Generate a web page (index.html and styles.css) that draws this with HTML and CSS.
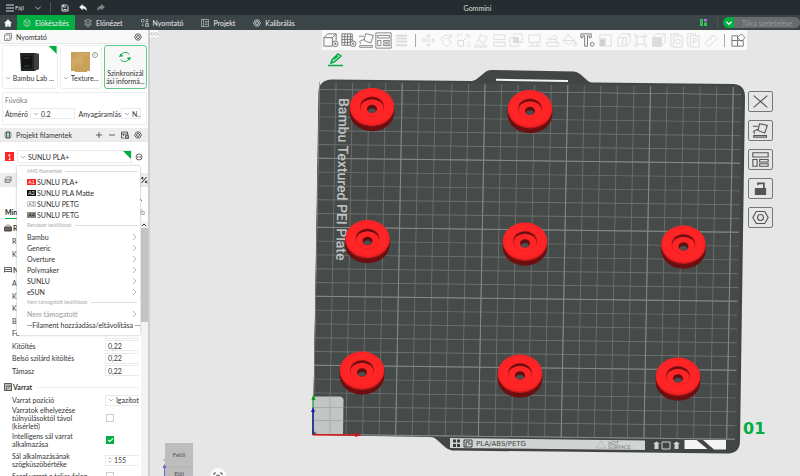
FILE: index.html
```html
<!DOCTYPE html>
<html lang="hu">

<head>
  <meta charset="UTF-8">
  <meta name="viewport" content="width=device-width, initial-scale=1.0">
  <title>Gommini</title>
  <link rel="stylesheet" href="styles.css">
</head>

<body>
  <svg class="defs" aria-hidden="true">
    <symbol id="down" viewBox="0 0 6 6"><path d="M1 2l2 2 2-2" /></symbol>
    <symbol id="right" viewBox="0 0 6 8"><path d="M2 1l3 3-3 3" /></symbol>
    <symbol id="gear" viewBox="0 0 16 16"><path stroke-width="1.500" d="M5 2h6l4 6-4 6H5L1 8z" /><circle cx="8" cy="8" r="3" stroke-width="1.500" /></symbol>
    <symbol id="cube" viewBox="0 0 16 16"><path d="M8 1l6 3v8l-6 3-6-3V4zM2 4l6 4 6-4M8 8v7" /></symbol>
    <symbol id="layers" viewBox="0 0 16 16"><path d="M8 1l7 3-7 4-7-4zM1 8l7 4 7-4M1 11l7 4 7-4" /></symbol>
    <symbol id="arrange" viewBox="0 0 20 20"><path d="M1 1h18v18H1zM3 4h14v3H3zM3 10h4v6H3zM10 10h7v2h-7zM10 14h7v2h-7z" /></symbol>
    <symbol id="orient" viewBox="0 0 20 20"><path d="M9 2l9 2-3 9-8-3zM2 16h15v2H2zM1 5h6M8 8l-6 3 1 3" /></symbol>
  </svg>

  <header class="titlebar">
    <button class="file"><svg class="ico" viewBox="0 0 8 8"><path d="M0 1h8M0 4h8M0 7h8" /></svg>Fájl</button>
    <button aria-label="Menü" class="more"><svg class="ico"><use href="#down" /></svg></button>
    <i class="line"></i>
    <button aria-label="Mentés"><svg class="ico" viewBox="0 0 16 16"><path stroke-width="2" d="M2 2h9l3 3v9H2zM5 2v4h5M5 11h6" /></svg></button>
    <button aria-label="Vissza"><svg class="ico" viewBox="0 0 16 16"><path fill="#fff" d="M1 6l6-5v3c5 0 8 3 8 9-2-3-4-4-8-4v3z" /></svg></button>
    <button aria-label="Újra" class="off"><svg class="ico" viewBox="0 0 16 16"><path fill="#888" d="M15 6L9 1v3C4 4 1 7 1 13c2-3 4-4 8-4v3z" /></svg></button>
    <h1>Gommini</h1>
  </header>

  <nav class="tabs">
    <a href="#" class="home" aria-label="Kezdőlap"><svg class="ico" viewBox="0 0 16 16"><path fill="#fff" d="M8 1l7 7h-2v7h-4v-4H7v4H3V8H1z" /></svg></a>
    <a href="#" class="active"><svg class="ico"><use href="#cube" /></svg>Előkészítés</a>
    <a href="#"><svg class="ico"><use href="#layers" /></svg>Előnézet</a>
    <a href="#"><svg class="ico" viewBox="0 0 16 16"><path d="M1 1h5v5H1zM10 1h4v4h-4zM3 9v4h3M9 9h6v6H9zM9 12h6M12 5v4" /></svg>Nyomtató</a>
    <a href="#"><svg class="ico" viewBox="0 0 16 16"><path d="M1 1h14v14H1zM5 1v14M8 5h5M8 8h5M8 11h5" /></svg>Projekt</a>
    <a href="#"><svg class="ico"><use href="#gear" /></svg>Kalibrálás</a>
    <span class="slice">
      <svg class="assist" viewBox="0 0 14 14"><path fill="#2fc35b" d="M0 0h6v14H0zM8 7h6v7H8z" /><path fill="#a77be0" d="M8 0h6v5H8z" /><path stroke="#333" d="M2 4h2M2 8h2" /></svg>
      <i class="line"></i>
      <button class="go" aria-label="Szeletelés módja"><svg class="ico"><use href="#down" /></svg></button>
      <button class="run" disabled>Tálca szeletelése</button>
    </span>
  </nav>

  <main>
    <aside class="sidebar">
      <div class="head">
        <svg class="ico" viewBox="0 0 16 16"><path d="M4 3V1h11v11h-2M1 4h11v11H1zM4 12h5" /></svg>
        <h2>Nyomtató</h2>
        <button aria-label="Nyomtató beállításai"><svg class="ico"><use href="#gear" /></svg></button>
      </div>
      <div class="cards">
        <div class="card printer">
          <svg class="photo" viewBox="0 0 20 20"><path fill="#222527" d="M0 1h14l5 1v15l-5 2H1z" /><path fill="#3d4144" d="M14 1l5 1v15l-5 2z" /><path fill="#101213" d="M2 4h10v12H2z" /><path stroke="#777" d="M3 6h7M4 14h6" stroke-width=".5" /></svg>
          <label class="combo"><svg class="ico"><use href="#down" /></svg><select aria-label="Nyomtató"><option>Bambu Lab ...</option></select></label>
        </div>
        <div class="card bed">
          <svg class="photo" viewBox="0 0 20 20"><path fill="#c9a15b" d="M0 0h19v19h-3v1H4v-1H0z" /><path fill="#cfa965" d="M1 8L9 1h9L1 16z" /><path stroke="#dcbd80" d="M10 7v6M7 10h6" stroke-width=".5" /></svg>
          <span class="info">i</span>
          <label class="combo"><svg class="ico"><use href="#down" /></svg><select aria-label="Tálca"><option>Texture...</option></select></label>
        </div>
        <button class="card sync">
          <svg viewBox="0 0 16 16"><path d="M3 6a6 6 0 0 1 10-1M13 10a6 6 0 0 1-10 1" /><path fill="#00ae42" d="M1 8l2-4 3 3zM15 8l-2 4-3-3z" stroke="none" /></svg>
          Szinkronizál<br>ási informá...
        </button>
      </div>
      <div class="nozzle">
        <p>Fúvóka</p>
        <div>
          <label for="dia">Átmérő</label>
          <span class="combo boxed dia"><svg class="ico"><use href="#down" /></svg><select id="dia"><option>0.2</option></select></span>
          <label for="flow">Anyagáramlás</label>
          <span class="combo boxed flow"><svg class="ico"><use href="#down" /></svg><select id="flow"><option>N...</option></select></span>
        </div>
      </div>
      <div class="head gray">
        <svg class="ico" viewBox="0 0 16 16"><path fill="#9edfb3" d="M5 2h6v12H5z" /><path d="M4 1C1 4 1 12 4 15M12 1c3 3 3 11 0 14M5 2h6v12H5z" /></svg>
        <h2>Projekt filamentek</h2>
        <button aria-label="Hozzáadás"><svg class="ico" viewBox="0 0 16 16"><path stroke-width="1.500" d="M8 2v12M2 8h12" /></svg></button>
        <button aria-label="Eltávolítás"><svg class="ico" viewBox="0 0 16 16"><path stroke-width="1.500" d="M2 8h12" /></svg></button>
        <button aria-label="AMS szinkron"><svg class="ico" viewBox="0 0 16 16"><path stroke-width="1.500" d="M1 6V2h12v5M1 6h14M1 6v8h6M5 6v4M9 9h6v6H9zM10 12h4" /></svg></button>
        <button aria-label="Filament beállításai"><svg class="ico"><use href="#gear" /></svg></button>
      </div>
      <div class="filament">
        <button class="num">1</button>
        <label class="combo boxed"><svg class="ico"><use href="#down" /></svg><select aria-label="Filament"><option>SUNLU PLA+</option></select></label>
        <button class="dots" aria-label="Szerkesztés"><svg class="ico" viewBox="0 0 16 16"><circle cx="8" cy="8" r="6" stroke-width="1.500" /><path stroke-width="2" d="M4 8h2M7 8h2M10 8h2" /></svg></button>

        <div class="menu">
          <p>AMS filamentek</p>
          <a href="#"><b class="a1">A1</b>SUNLU PLA+</a>
          <a href="#"><b class="a2">A2</b>SUNLU PLA Matte</a>
          <a href="#"><b class="a3">A3</b>SUNLU PETG</a>
          <a href="#"><b class="a4">A4</b>SUNLU PETG</a>
          <p class="sub">Rendszer beállítások</p>
          <a href="#">Bambu<svg class="ico"><use href="#right" /></svg></a>
          <a href="#">Generic<svg class="ico"><use href="#right" /></svg></a>
          <a href="#">Overture<svg class="ico"><use href="#right" /></svg></a>
          <a href="#">Polymaker<svg class="ico"><use href="#right" /></svg></a>
          <a href="#">SUNLU<svg class="ico"><use href="#right" /></svg></a>
          <a href="#">eSUN<svg class="ico"><use href="#right" /></svg></a>
          <p class="sub">Nem támogatott beállítások</p>
          <a href="#" class="dim">Nem támogatott<svg class="ico"><use href="#right" /></svg></a>
          <a href="#">--Filament hozzáadása/eltávolítása --</a>
        </div>
      </div>
      <div class="head gray process">
        <svg class="ico" viewBox="0 0 16 16"><path d="M5 2h10l-3 5H2zM2 7v3h10l3-5M2 10v3h10l3-5" /></svg>
        <button aria-label="Összehasonlítás"><svg class="ico" viewBox="0 0 16 16"><path stroke-width="2" d="M3 14L13 2M2 4h5M5 2v5M10 10l5 4M10 14l4-5" /></svg></button>
      </div>
      <div class="preset"><svg class="ico" viewBox="0 0 6 6"><path d="M1 2l3 3" /></svg></div>
      <div class="pages"><a href="#" class="on">Min</a><a href="#">eb</a></div>

      <div class="params">
        <div class="list">
          <h3><svg class="ico" viewBox="0 0 16 16"><path fill="#777" d="M1 6h14v8H1z" /><path d="M3 5l2-3h6l2 3M1 6h14v8H1zM1 10h14" /></svg>R</h3>
          <div class="rows two">
            <div class="row">R</div>
            <div class="row">K</div>
          </div>
          <h3><svg class="ico" viewBox="0 0 16 16"><path stroke-width="1.500" d="M1 3h14v4H1zM1 7v6M15 7v6M1 11h14" /></svg>N</h3>
          <div class="rows">
            <div class="row">A</div>
            <div class="row">K</div>
            <div class="row">K</div>
            <div class="row">B</div>
            <div class="row"><label for="w0">Fe</label><input id="w0" value=""></div>
            <div class="row"><label for="w1">Kitöltés</label><input id="w1" value="0,22"></div>
            <div class="row"><label for="w2">Belső szilárd kitöltés</label><input id="w2" value="0,22"></div>
            <div class="row"><label for="w3">Támasz</label><input id="w3" value="0,22"></div>
          </div>
          <h3><svg class="ico" viewBox="0 0 16 16"><path fill="#bbb" d="M1 1h14v14H1z" /><path d="M1 1h14v14H1zM5 15V6h10M8 10l4-4" /></svg>Varrat</h3>
          <div class="row"><label for="seam">Varrat pozíció</label><span class="combo boxed"><svg class="ico"><use href="#down" /></svg><select id="seam"><option>Igazított</option></select></span></div>
          <div class="row"><label for="c1">Varratok elhelyezése<br>túlnyúlásoktól távol<br>(kísérleti)</label><input type="checkbox" id="c1"></div>
          <div class="row tall"><label for="c2">Intelligens sál varrat<br>alkalmazása</label><input type="checkbox" id="c2" checked></div>
          <div class="row tall"><label for="ang">Sál alkalmazásának<br>szögküszöbértéke</label><span class="spin"><svg class="ico" viewBox="0 0 6 10"><path d="M1 4l2-2 2 2M1 6l2 2 2-2" /></svg><input id="ang" value="155"></span></div>
          <div class="row"><label for="c3">Scarf varrat a teljes falon</label><input type="checkbox" id="c3"></div>
        </div>
        <div class="scroll"><svg class="ico" viewBox="0 0 6 6"><path d="M1 4l2-2 2 2" /></svg><i></i></div>
      </div>
    </aside>

    <section class="view">
      <svg class="scene" viewBox="150 30 650 446" preserveAspectRatio="xMinYMin meet">
        <defs>
          <g id="ring">
            <path fill="#6d0f10" d="M-22.3 0v6a22.3 18.7 0 0 0 44.6 0V0z" />
            <ellipse rx="22.3" ry="19" cy="1" fill="#c81a1c" />
            <ellipse rx="22" ry="18.5" fill="#ff2526" />
            <ellipse rx="20.5" ry="17" fill="none" stroke="#ec2022" stroke-width=".6" />
            <ellipse rx="12" ry="10.2" fill="#c41a1b" />
            <ellipse rx="11.4" ry="9.6" fill="#6a0e0f" />
            <ellipse rx="11.4" ry="8.6" cy="1.4" fill="#ff2526" />
            <ellipse rx="5" ry="4.2" cy="2.4" fill="#5c1212" />
            <ellipse rx="3.8" ry="2.2" cy="4.2" fill="#4c4f4f" />
          </g>
        </defs>
        <path fill="#414645" d="M332 79.500L472 81Q475 81 478 78L486 71.500Q488 70 491 70L574 71.500Q577 71.500 580 74L588 81Q590 82.500 593 82.500L734 84Q745 85 745 97L740 441Q740 453 728 453.500L452 450.500Q448 450 445 447L436 439Q434 437 430 437L313 435L318.500 92Q319 80 332 79.500z" />
        <path fill="#464b4a" d="M330 81L736 86Q742 88 742 96L737 439L313 434.500L319 90Q320 82 330 81z" />
        <!-- grid: thick dashed strokes, every fifth line brighter -->
        <g transform="matrix(1 .0118 -.0188 1 319.400 89.300)">
          <path stroke="#6c706f" stroke-width="352" stroke-dasharray=".9 15.65" stroke-dashoffset="-16.1" d="M0 169H422" />
          <path stroke="#6c706f" stroke-width="422" stroke-dasharray=".9 12.9" stroke-dashoffset=".45" d="M211 0V345.500" />
          <path stroke="#858987" stroke-width="352" stroke-dasharray="1 81.75" stroke-dashoffset="-82.25" d="M0 169H422" />
          <path stroke="#858987" stroke-width="422" stroke-dasharray="1 68" stroke-dashoffset=".5" d="M211 0V345.500" />
        </g>
        <path d="M496 79.800L568 81" stroke="#f4f4f4" stroke-width="2" />
        <path fill="#c3c5c4" d="M313 396.500L340 396.500Q343.500 397 343.500 400L343 434.500H320Q313 434 313 427z" />
        <path d="M330 397v37M313 407.500h30M313 420.500h30" stroke="#a7aaa8" fill="none" />
        <path d="M313 434V397" stroke="#0a9e12" stroke-width="1.200" /><path fill="#0a9e12" d="M311.500 400l2-6 2 6z" />
        <path d="M313 435V410" stroke="#1a1a9c" stroke-width="1.500" /><path fill="#1a1ab0" d="M311 412l2-5 2 5z" />
        <path d="M312.500 434.700L356 435" stroke="#d41414" stroke-width="1.500" /><path fill="#d41414" d="M355 433l7 2-7 2z" />
        <text class="plate" transform="translate(339 98) rotate(91)">Bambu Textured PEI Plate</text>
        <path fill="#d1d4d3" d="M450 438L645 440.500V450L450 448z" />
        <path d="M453 439.500h3v3h-3zM457 439.500h3v3h-3zM453 444h3v3h-3zM457 444h3v3h-3z" fill="#3a3e3d" />
        <path d="M464 440h8v7h-8zM466 447v-5h4M468 444h3" fill="none" stroke="#3a3e3d" />
        <text class="mat" x="476" y="446">PLA/ABS/PETG</text>
        <path d="M596 448l5-7 5 7z" fill="none" stroke="#aaa" stroke-width=".6" />
        <text class="hot" x="608" y="444.500">HOT</text><text class="hot" x="608" y="449">SURFACE</text>
        <path fill="#d1d4d3" d="M653 444l3.500-2.500 3.500 2.500h-1.500v5h-4v-5zM673 444l3.500-2.500 3.500 2.500h-1.500v5h-4v-5z" />
        <path fill="none" stroke="#d1d4d3" d="M662 442h8v7h-8z" />
        <path fill="#f4f4f4" d="M684.500 440h12l11 9h-23zM703 440h23v9.500h-12z" />
        <use href="#ring" x="372" y="106.500" /><use href="#ring" x="530" y="108.500" />
        <use href="#ring" x="367.500" y="238.500" /><use href="#ring" x="525" y="241" /><use href="#ring" x="683.500" y="244" />
        <use href="#ring" x="362" y="370" /><use href="#ring" x="520" y="373" /><use href="#ring" x="678" y="376" />
        <text class="no" x="743" y="434">01</text>
        <path fill="#bdbdbd" d="M165 443h28v33h-28z" /><path stroke="#b4b4b4" d="M165 467h28" />
        <path stroke="#6a66c4" d="M164.500 476v-10" /><path fill="#6a66c4" d="M162.500 468l2-4 2 4z" /><path fill="#9fd0a2" d="M163 461l1.500-3 1.500 3z" />
        <text class="face" x="179" y="457">Felül</text><text class="face" x="179" y="476">Elöl</text>
        <circle cx="218" cy="476" r="8" fill="#fafafa" />
        <path d="M214 475v-2h2M220 473h2v2M216 476l2-1 2 1v2" fill="none" stroke="#555" />
      </svg>

      <button class="fold" aria-label="Oldalsáv"><svg class="ico" viewBox="0 0 16 16"><path stroke-width="1.500" d="M5 4L1 8l4 4M11 4l4 4-4 4" /><circle cx="8" cy="8" r="2" /></svg></button>

      <div class="toolbar">
        <button aria-label="Hozzáadás"><svg viewBox="0 0 18 18"><path d="M2 6l4-4h9v7M2 6h9v9H2zM11 6l4-4" /><circle class="w" cx="14" cy="12.500" r="3" /><path d="M14 11v3M12.500 12.500h3" /></svg></button>
        <button aria-label="Új tálca"><svg viewBox="0 0 18 18"><path d="M2 2h11v12H2zM2 5h11M2 8h11M2 11h11M5 2v12M8 2v12M11 2v12" /><circle class="w" cx="14" cy="12.500" r="3" /><path d="M14 11v3M12.500 12.500h3" /></svg></button>
        <button aria-label="Tájolás"><svg><use href="#orient" /></svg></button>
        <button aria-label="Elrendezés"><svg><use href="#arrange" /></svg></button>
        <button class="dis" aria-label="Rétegmagasság"><svg viewBox="0 0 18 18"><path stroke-width="2" d="M3 4h12M3 7h12M3 10h12M3 14h12" /></svg></button>
        <i></i>
        <button class="dis" aria-label="Mozgatás"><svg viewBox="0 0 18 18"><path d="M9 2l2 3H7zM9 16l2-3H7zM2 9l3-2v4zM16 9l-3-2v4z" /><circle cx="9" cy="9" r="1.500" /></svg></button>
        <button class="dis" aria-label="Forgatás"><svg viewBox="0 0 18 18"><path d="M9 6l5 5-5 5-5-5zM3 9a6 6 0 0 1 11-3M14 2v4h-3" /></svg></button>
        <button class="dis" aria-label="Méretezés"><svg viewBox="0 0 18 18"><path d="M3 9h6v6H3zM9 9l5-5M11 3h4v4" /><path stroke-dasharray="2 1" d="M3 6V3h6M15 10v5h-4" /></svg></button>
        <button class="dis" aria-label="Fektetés"><svg viewBox="0 0 18 18"><path d="M8 3l7 2-3 7-6-3zM2 14h12v2H2zM5 8l-2 4" /></svg></button>
        <button class="dis" aria-label="Vágás"><svg viewBox="0 0 18 18"><path d="M3 3h12v5H3zM3 11h12v4H3z" /></svg></button>
        <button class="dis" aria-label="Logikai"><svg viewBox="0 0 18 18"><path d="M6 2h9v9H6zM2 6h9v9H2z" /><path fill="#ddd" d="M6 6h5v5H6z" /></svg></button>
        <button class="dis" aria-label="Támasz"><svg viewBox="0 0 18 18"><path d="M3 3h12v8H3zM6 11v4M12 11v4M3 15h12" /></svg></button>
        <button class="dis" aria-label="Varrat"><svg viewBox="0 0 18 18"><path d="M3 11h12v4H3zM4 8h9v3M5 8l6-5 3 2-4 3" /></svg></button>
        <button class="dis" aria-label="Festés"><svg viewBox="0 0 18 18"><path d="M2 9l6-6 6 6-6 5zM2 9h12M6 1l4 4M15 10c2 3 1 5 0 5s-2-2 0-5" /></svg></button>
        <button aria-label="Szöveg"><svg viewBox="0 0 18 18"><path d="M2 2h11v4h-2V4H9v11H6V4H4v2H2z" /><circle cx="14" cy="13" r="2" /></svg></button>
        <button class="dis" aria-label="Illesztés"><svg viewBox="0 0 18 18"><path d="M3 3h12v12H9V7H3z" /><path fill="#ccc" d="M3 8h5v7H3z" /></svg></button>
        <button class="dis" aria-label="Méret"><svg viewBox="0 0 18 18"><path d="M3 6l4-4h9v9l-4 4H3zM3 6h9v9M12 6l4-4M7 15l2-9" /></svg></button>
        <button class="dis" aria-label="Keret"><svg viewBox="0 0 18 18"><path d="M5 5h8v8H5z" /><circle cx="4" cy="4" r="1.500" /><circle cx="14" cy="4" r="1.500" /><circle cx="4" cy="14" r="1.500" /><circle cx="14" cy="14" r="1.500" /></svg></button>
        <button class="dis" aria-label="Háló"><svg viewBox="0 0 18 18"><path fill="#ddd" d="M3 6h9v9H3z" /><path d="M3 6l4-4h9v9l-4 4H3zM3 6h9v9M12 6l4-4M3 9h9M3 12h9M6 6v9M9 6v9" /></svg></button>
        <button class="dis" aria-label="Másolat"><svg viewBox="0 0 18 18"><path d="M5 15H3V2h8v2M6 4h9v12H6z" /><circle cx="10.500" cy="10" r="2.500" /></svg></button>
        <button class="dis" aria-label="Paraméter"><svg viewBox="0 0 18 18"><path d="M5 15H3V2h8v2M6 4h9v12H6zM9 13V7h3v3H9" /></svg></button>
        <button class="dis" aria-label="Mérés"><svg viewBox="0 0 18 18"><path d="M2 12l9-9 4 4-9 9zM8 6l1 2M11 3l1 2" /></svg></button>
        <i></i>
        <button aria-label="Összeállítás"><svg viewBox="0 0 18 18"><path d="M2 4h6v5H2zM2 9h6v6H2zM8 9h6v6H8zM12 2l4 4-4 4-4-4z" /></svg></button>
      </div>
      <button class="pen" aria-label="Név szerkesztése"><svg viewBox="0 0 16 14"><path d="M3 10l1-3 6-6 3 2-7 6zM6 6l4-3M0 12.500h15" /></svg></button>

      <div class="tools">
        <button aria-label="Törlés"><svg viewBox="0 0 20 20"><path d="M2 3l16 14M18 3L2 17" /></svg></button>
        <button aria-label="Auto"><svg><use href="#orient" /></svg></button>
        <button aria-label="Rendezés"><svg viewBox="0 0 20 20"><path d="M1 2h18v5H1zM1 10h5v8H1zM9 10h10v3H9zM9 15h10v3H9z" /></svg></button>
        <button aria-label="Zárolás"><svg viewBox="0 0 20 20"><path fill="#555" d="M4 10h12v7H4z" /><path stroke-width="2" d="M14 10V4H7v2" /></svg></button>
        <button aria-label="Tálca beállításai"><svg viewBox="0 0 20 20"><path d="M5 3h10l4 7-4 7H5l-4-7z" /><circle cx="10" cy="10" r="3.500" /></svg></button>
      </div>
    </section>
  </main>
</body>

</html>
```

FILE: styles.css
```css
* {
  box-sizing: border-box;
}

body {
  margin: 0;
  height: 100vh;
  display: flex;
  flex-direction: column;
  overflow: hidden;
  font: 7px/8px Lato, "Noto Sans", sans-serif;
  color: #333;
  background: #e6e6e6;
}

h1,
h2,
h3,
p {
  margin: 0;
  font-size: 7px;
  font-weight: normal;
}

a {
  color: inherit;
  text-decoration: none;
}

button,
input,
select {
  font: inherit;
  color: inherit;
  margin: 0;
  padding: 0;
  border: 0;
  background: none;
  border-radius: 0;
  outline: none;
}

select {
  appearance: none;
  min-width: 0;
}

svg {
  fill: none;
  stroke-width: 1;
}

.defs {
  position: absolute;
  width: 0;
  height: 0;
}

.ico {
  width: 8px;
  height: 8px;
  flex: none;
  stroke: currentColor;
}

button {
  display: flex;
  align-items: center;
  justify-content: center;
}

.line {
  width: 1px;
  height: 11px;
  background: #4c5457;
}

/* top bars */
.titlebar {
  position: relative;
  flex: none;
  height: 15px;
  display: flex;
  align-items: center;
  gap: 10px;
  padding-left: 6px;
  background: #262d30;
  color: #ddd;
}

.titlebar .file {
  gap: 1px;
  font-size: 6px;
}

.titlebar .more {
  margin-right: -2px;
}

.titlebar .more .ico {
  stroke-width: .6;
}

.titlebar .off {
  color: #888;
}

.titlebar h1 {
  position: absolute;
  left: 0;
  right: 0;
  padding-left: 155px;
  text-align: center;
  pointer-events: none;
}

.tabs {
  flex: none;
  height: 15px;
  display: flex;
  background: #3b4446;
  color: #eee;
}

.tabs a {
  display: flex;
  align-items: center;
  gap: 4px;
  padding: 0 9px;
}

.tabs a.home {
  width: 17px;
  padding: 0 4px;
}

.tabs a.active {
  width: 58px;
  padding: 0 6px;
  background: #00ae42;
}

.slice {
  margin-left: auto;
  display: flex;
  align-items: center;
}

.slice .assist {
  width: 7px;
  height: 7px;
}

.slice .line {
  margin: 0 5px 0 10px;
}

.slice .go {
  width: 11px;
  height: 11px;
  background: #00ae42;
  border-radius: 6px 0 0 6px;
}

.slice .run {
  width: 66px;
  height: 11px;
  background: #686c6d;
  color: #999;
  border-radius: 0 6px 6px 0;
}

main {
  flex: 1;
  min-height: 0;
  display: flex;
}

/* left panel */
.sidebar {
  width: 150px;
  flex: none;
  display: flex;
  flex-direction: column;
  background: #fff;
  border-right: 2px solid #cfcfcf;
}

.head {
  flex: none;
  height: 14px;
  display: flex;
  align-items: center;
  gap: 4px;
  padding: 0 6px 0 4px;
  background: #f8f8f8;
  border-bottom: 1px solid #e8e8e8;
}

.head h2 {
  margin-right: auto;
}

.head button + button {
  margin-left: 1px;
}

.head.gray {
  background: #ededed;
}

.cards {
  flex: none;
  display: flex;
  gap: 2px;
  height: 44px;
  margin: 1px 1px 3px 2px;
}

.card {
  position: relative;
  display: flex;
  flex-direction: column;
  align-items: center;
  border: 1px solid #eee;
  border-radius: 3px;
}

.card .photo {
  width: 20px;
  height: 20px;
  margin: 6px 0 2px;
}

.printer {
  flex: 56;
}

.bed {
  flex: 42;
}

.printer::after,
.filament .combo::after {
  content: "";
  position: absolute;
  top: 0;
  right: 0;
  width: 8px;
  height: 8px;
  background: #00ae42;
  clip-path: polygon(0 0, 100% 0, 100% 100%);
}

.info {
  position: absolute;
  top: 6px;
  right: 3px;
  width: 6px;
  height: 6px;
  border: 1px solid #999;
  border-radius: 50%;
  font-size: 4px;
  line-height: 4px;
  text-align: center;
}

.sync {
  flex: 43;
  border-color: #5fcb88;
  background: #f7f7f7;
  display: block;
  text-align: center;
  white-space: nowrap;
}

.sync svg {
  display: block;
  width: 14px;
  height: 14px;
  margin: 0 auto 5px;
  stroke: #00ae42;
}

.combo {
  position: relative;
  display: flex;
  align-items: center;
  gap: 2px;
}

.combo .ico {
  width: 6px;
  height: 6px;
  color: #999;
  stroke-width: .7;
}

.boxed {
  height: 11px;
  padding-left: 2px;
  border: 1px solid #eaeaea;
}

.nozzle {
  flex: none;
  height: 33px;
  margin: 0 1px 3px 2px;
  padding: 3px 5px 0 2px;
  border: 1px solid #eee;
  white-space: nowrap;
}

.nozzle p {
  color: #777;
}

.nozzle div {
  display: flex;
  align-items: center;
  margin-top: 4px;
}

.nozzle .dia {
  width: 46px;
  margin: 0 3px 0 2px;
}

.nozzle .flow {
  width: 20px;
  margin-left: auto;
}

.filament {
  position: relative;
  flex: none;
  height: 31px;
  display: flex;
  align-items: flex-start;
  gap: 3px;
  padding: 8px 5px 0;
}

.filament .num {
  width: 9px;
  height: 9px;
  margin-top: 2px;
  background: #ff2526;
  color: #fff;
}

.filament .combo {
  flex: 1;
  height: 13px;
}

.filament .dots {
  margin-top: 3px;
}

.menu {
  position: absolute;
  z-index: 2;
  top: 24px;
  left: 17px;
  width: 123px;
  padding-bottom: 5px;
  background: #fff;
  box-shadow: 0 0 2px #aaa;
  white-space: nowrap;
}

.menu p {
  display: flex;
  align-items: center;
  gap: 3px;
  height: 10px;
  padding: 0 3px 0 10px;
  font-size: 5px;
  color: #aaa;
}

.menu p.sub {
  margin-bottom: 1px;
}

.menu p::after {
  content: "";
  flex: 1;
  height: 1px;
  background: #ddd;
}

.menu a {
  height: 11px;
  display: flex;
  align-items: center;
  padding: 0 2px 0 10px;
}

.menu a .ico {
  margin-left: auto;
  color: #999;
  stroke-width: .7;
}

.menu a.dim {
  color: #999;
}

.menu b {
  width: 9px;
  height: 6px;
  margin-right: 1px;
  font-size: 5px;
  line-height: 6px;
  font-weight: normal;
  text-align: center;
}

.menu .a1 {
  background: #ff2526;
  color: #fff;
}

.menu .a2 {
  background: #111;
  color: #fff;
}

.menu .a3 {
  background: #fff;
  color: #666;
  box-shadow: 0 0 0 1px #ccc inset;
}

.menu .a4 {
  background: #8b8b8b;
  color: #222;
}

.process {
  padding-right: 0;
  justify-content: space-between;
}

.preset {
  flex: none;
  height: 20px;
  padding: 8px 4px 0 0;
  text-align: right;
}

.preset .ico {
  width: 6px;
  height: 6px;
  stroke-width: .7;
}

.pages {
  flex: none;
  height: 14px;
  display: flex;
  justify-content: space-between;
  padding: 0 3px 0 5px;
  color: #888;
}

.pages a {
  height: 12px;
  padding-top: 1px;
}

.pages .on {
  color: #222;
  font-weight: bold;
  border-bottom: 1px solid #00ae42;
}

.params {
  flex: 1;
  min-height: 0;
  display: flex;
}

.list {
  flex: 1;
  min-width: 0;
  overflow: hidden;
  padding: 0 2px 0 4px;
}

.list h3 {
  height: 14px;
  display: flex;
  align-items: center;
  gap: 1px;
  font-weight: bold;
  color: #333;
}

.list h3::after {
  content: "";
  flex: 1;
  height: 1px;
  margin-left: 3px;
  background: #eee;
}

.rows {
  height: 100px;
  display: flex;
  flex-direction: column;
  justify-content: space-between;
  margin-bottom: 3px;
}

.rows.two {
  height: 25px;
}

.row {
  min-height: 12px;
  display: grid;
  grid-template-columns: 93px 1fr;
  align-items: center;
  padding-left: 8px;
  white-space: nowrap;
}

.row.tall {
  min-height: 20px;
}

.row > * {
  min-width: 0;
}

.row input {
  width: 100%;
  height: 11px;
  padding-left: 2px;
  border: 1px solid #eaeaea;
  border-right: 0;
}

.row .boxed {
  overflow: hidden;
  border-right: 0;
}

.row input[type="checkbox"] {
  appearance: none;
  width: 8px;
  height: 8px;
  padding: 0;
  margin-left: 1px;
  border: 1px solid #ccc;
}

.row input[type="checkbox"]:checked {
  border-color: #00ae42;
  background: #00ae42;
}

.row input[type="checkbox"]:checked::after {
  content: "";
  display: block;
  width: 4px;
  height: 2px;
  margin: 1px;
  border: solid #fff;
  border-width: 0 0 1px 1px;
  transform: rotate(-45deg);
}

.spin {
  display: flex;
  align-items: center;
  border: 1px solid #eaeaea;
  border-right: 0;
  color: #999;
}

.spin input {
  border: 0;
  height: 9px;
  padding: 0;
  color: #444;
}

.scroll {
  width: 7px;
  padding-top: 1px;
  background: #f3f3f3;
}

.scroll .ico {
  display: block;
  width: 6px;
  height: 6px;
}

.scroll i {
  display: block;
  height: 94px;
  background: #c4c4c4;
}

/* 3D view */
.view {
  position: relative;
  flex: 1;
  min-width: 0;
}

.scene {
  position: absolute;
  top: 0;
  left: 0;
  width: 100%;
  height: 100%;
}

.plate {
  font: 500 14px Roboto, sans-serif;
  fill: #bfc2c0;
}

.mat {
  font: 7px "DejaVu Sans", sans-serif;
  fill: #444847;
}

.hot {
  font: 5px "DejaVu Sans", sans-serif;
  fill: #777;
}

.no {
  font: bold 16px "DejaVu Sans", sans-serif;
  fill: #00ae42;
}

.face {
  font-size: 6px;
  fill: #555;
  text-anchor: middle;
}

.fold {
  position: absolute;
  top: 0;
  left: 0;
  width: 8px;
  height: 7px;
  background: #fff;
  color: #999;
}

.toolbar {
  position: relative;
  display: flex;
  justify-content: space-between;
  align-items: center;
  width: 425px;
  height: 20px;
  margin-left: 172px;
  background: #fafafa;
}

.toolbar button {
  width: 18px;
  height: 20px;
}

.toolbar svg {
  width: 17px;
  height: 17px;
  stroke: #777;
}

.toolbar .w {
  fill: #fafafa;
}

.toolbar .dis svg {
  stroke: #dcdcdc;
}

.toolbar i {
  width: 1px;
  height: 13px;
  margin: 0 4px;
  background: #aaa;
}

.pen {
  position: relative;
  margin: 3px 0 0 178px;
}

.pen svg {
  width: 16px;
  height: 14px;
  stroke: #00ae42;
  stroke-width: 1.5;
}

.tools {
  position: absolute;
  top: 61px;
  left: 598px;
  display: flex;
  flex-direction: column;
  gap: 8px;
}

.tools button {
  width: 25px;
  height: 21px;
  border: 1px solid #777;
  border-radius: 2px;
}

.tools svg {
  width: 19px;
  height: 17px;
  stroke: #555;
  stroke-width: 1.3;
}
```
